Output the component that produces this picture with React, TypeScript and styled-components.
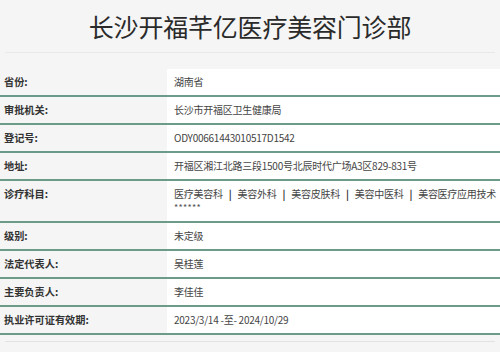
import styled, { createGlobalStyle } from "styled-components";

const GlobalStyle = createGlobalStyle`
  body {
    margin: 0;
    background: #f5f5f5;
    font-family: "Noto Sans CJK SC", "Noto Sans", sans-serif;
    color: #333;
  }
`;

const Page = styled.div`
  width: 500px;
  height: 352px;
  overflow: hidden;
`;

const Header = styled.h1`
  margin: 0 5px;
  height: 52px;
  display: flex;
  align-items: center;
  justify-content: center;
  font-size: 25px;
  font-weight: 400;
  color: #2a2a2a;
  letter-spacing: -0.2px;
  border-bottom: 1px solid #e8e8e8;
`;

const Table = styled.div`
  margin-top: 16px;
  display: flex;
  flex-direction: column;
`;

const Row = styled.div`
  display: grid;
  grid-template-columns: 167px 1fr;
  border-bottom: 2px solid #6a9c89;
`;

const Label = styled.div`
  padding: 6px 4px;
  font-size: 10.2px;
  line-height: 14px;
  font-weight: 700;
  color: #333;
  background: #f5f5f5;
`;

const Value = styled.div`
  padding: 6px 7px;
  font-size: 10px;
  line-height: 14px;
  letter-spacing: -0.25px;
  color: #444;
  background: #fff;
`;

const Line = styled.div`
  white-space: nowrap;
`;

const Sep = styled.span`
  margin: 0 6px;
  font-weight: 700;
  color: #333;
`;

const Stars = styled.div`
  font-size: 9px;
  letter-spacing: 0.3px;
  color: #555;
`;

const Footer = styled.div`
  margin: 6px 5px 0;
  border-top: 1px solid #e2e2e2;
`;

const rows: [string, string][] = [
  ["省份:", "湖南省"],
  ["审批机关:", "长沙市开福区卫生健康局"],
  ["登记号:", "ODY00661443010517D1542"],
  ["地址:", "开福区湘江北路三段1500号北辰时代广场A3区829-831号"],
];

const after: [string, string][] = [
  ["级别:", "未定级"],
  ["法定代表人:", "吴桂莲"],
  ["主要负责人:", "李佳佳"],
  ["执业许可证有效期:", "2023/3/14 -至- 2024/10/29"],
];

const subjects = ["医疗美容科", "美容外科", "美容皮肤科", "美容中医科", "美容医疗应用技术"];

export default function App() {
  return (
    <Page>
      <GlobalStyle />
      <Header>长沙开福芊亿医疗美容门诊部</Header>
      <Table>
        {rows.map(([k, v]) => (
          <Row key={k}>
            <Label>{k}</Label>
            <Value>{v}</Value>
          </Row>
        ))}
        <Row>
          <Label>诊疗科目:</Label>
          <Value>
            <Line>
              {subjects.map((s, i) => (
                <span key={s}>
                  {i > 0 && <Sep>|</Sep>}
                  {s}
                </span>
              ))}
            </Line>
            <Stars>******</Stars>
          </Value>
        </Row>
        {after.map(([k, v]) => (
          <Row key={k}>
            <Label>{k}</Label>
            <Value>{v}</Value>
          </Row>
        ))}
      </Table>
      <Footer />
    </Page>
  );
}
